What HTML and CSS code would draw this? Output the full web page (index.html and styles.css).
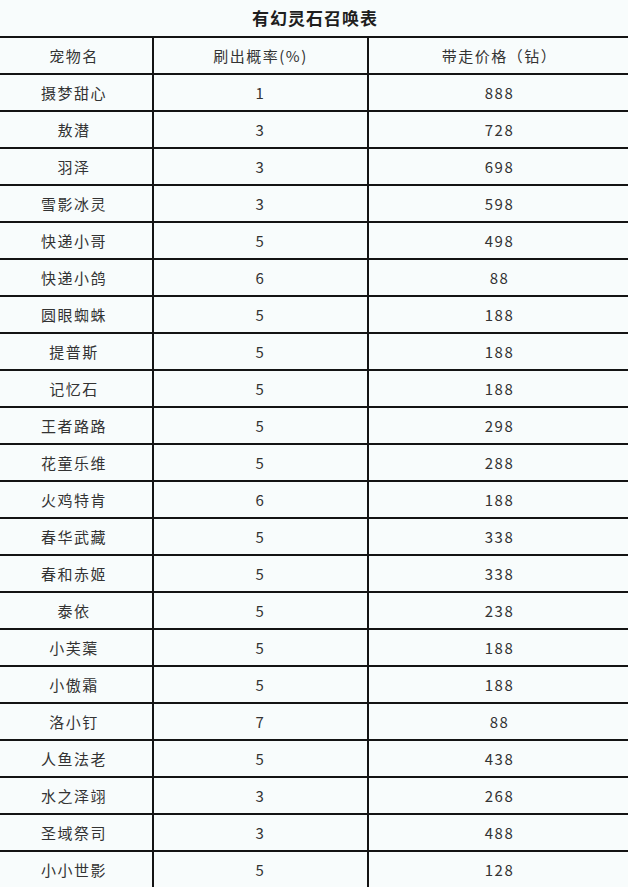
FILE: index.html
```html
<!DOCTYPE html>
<html lang="zh">
<head>
<meta charset="utf-8">
<link rel="stylesheet" href="styles.css">
</head>
<body>
<div class="page">
  <h1 class="title">有幻灵石召唤表</h1>
  <table class="summon">
    <colgroup><col class="c1"><col class="c2"><col class="c3"></colgroup>
    <thead>
      <tr><th>宠物名</th><th>刷出概率(%)</th><th>带走价格（钻）</th></tr>
    </thead>
    <tbody>
      <tr><td>摄梦甜心</td><td>1</td><td>888</td></tr>
      <tr><td>敖潜</td><td>3</td><td>728</td></tr>
      <tr><td>羽泽</td><td>3</td><td>698</td></tr>
      <tr><td>雪影冰灵</td><td>3</td><td>598</td></tr>
      <tr><td>快递小哥</td><td>5</td><td>498</td></tr>
      <tr><td>快递小鸽</td><td>6</td><td>88</td></tr>
      <tr><td>圆眼蜘蛛</td><td>5</td><td>188</td></tr>
      <tr><td>提普斯</td><td>5</td><td>188</td></tr>
      <tr><td>记忆石</td><td>5</td><td>188</td></tr>
      <tr><td>王者路路</td><td>5</td><td>298</td></tr>
      <tr><td>花童乐维</td><td>5</td><td>288</td></tr>
      <tr><td>火鸡特肯</td><td>6</td><td>188</td></tr>
      <tr><td>春华武藏</td><td>5</td><td>338</td></tr>
      <tr><td>春和赤姬</td><td>5</td><td>338</td></tr>
      <tr><td>泰依</td><td>5</td><td>238</td></tr>
      <tr><td>小芙蕖</td><td>5</td><td>188</td></tr>
      <tr><td>小傲霜</td><td>5</td><td>188</td></tr>
      <tr><td>洛小钉</td><td>7</td><td>88</td></tr>
      <tr><td>人鱼法老</td><td>5</td><td>438</td></tr>
      <tr><td>水之泽翊</td><td>3</td><td>268</td></tr>
      <tr><td>圣域祭司</td><td>3</td><td>488</td></tr>
      <tr><td>小小世影</td><td>5</td><td>128</td></tr>
    </tbody>
  </table>
</div>
</body>
</html>
```

FILE: styles.css
```css
html, body {
  margin: 0;
  padding: 0;
  background: #f8fcfc;
  overflow: hidden;
}
body {
  font-family: "Noto Sans CJK SC", "Noto Sans", sans-serif;
  color: #333;
}
.page {
  width: 628px;
  height: 887px;
  overflow: hidden;
}
.title {
  margin: 0;
  height: 36px;
  line-height: 35px;
  font-size: 17px;
  font-weight: 700;
  text-align: center;
  color: #1e1e1e;
  letter-spacing: 1px;
  padding-left: 2px;
}
.summon {
  border-collapse: collapse;
  margin-left: -6px;
  width: 646px;
  table-layout: fixed;
}
.c1 { width: 158px; }
.c2 { width: 215px; }
.c3 { width: 273px; }
.summon th,
.summon td {
  border: 2px solid #141414;
  height: 35px;
  padding: 0;
  text-align: center;
  vertical-align: middle;
  font-size: 15px;
  font-weight: 400;
  letter-spacing: 1.5px;
  color: #333;
  line-height: 20px;
}
.summon td:last-child,
.summon th:last-child {
  padding-right: 10px;
}
```
